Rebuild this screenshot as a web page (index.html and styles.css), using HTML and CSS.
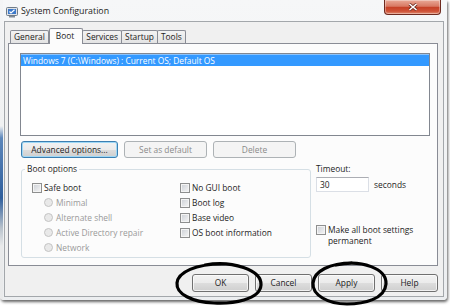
FILE: index.html
```html
<!DOCTYPE html>
<html lang="en">

<head>
    <meta charset="utf-8">
    <meta name="viewport" content="width=device-width, initial-scale=1.0">
    <title>System Configuration</title>
    <link rel="stylesheet" href="styles.css">
</head>

<body>
    <div class="window">
        <div class="titlebar">
            <svg class="app-icon" width="12" height="12" viewBox="0 0 12 12">
                <rect x="0.5" y="1.5" width="11" height="8" rx="1" fill="#dfe3e8" stroke="#6f7b88"/>
                <rect x="2" y="3" width="8" height="5" fill="#3b78c9"/>
                <path d="M3.5 5.5 L5 7 L8.5 3.8" fill="none" stroke="#fff" stroke-width="1.2"/>
                <rect x="3" y="10" width="6" height="1.5" fill="#7f8a96"/>
            </svg>
            <span class="title">System Configuration</span>
            <button class="close">
                <svg width="10" height="8" viewBox="0 0 10 8">
                    <path d="M1.5 1 L8.5 7 M8.5 1 L1.5 7" stroke="#6b2a1e" stroke-width="3"/>
                    <path d="M1.5 1 L8.5 7 M8.5 1 L1.5 7" stroke="#fff" stroke-width="1.6"/>
                </svg>
            </button>
        </div>

        <div class="client">
            <nav class="tabs">
                <span class="tab">General</span>
                <span class="tab current">Boot</span>
                <span class="tab">Services</span>
                <span class="tab">Startup</span>
                <span class="tab">Tools</span>
            </nav>

            <section class="panel">
                <ul class="oslist">
                    <li class="selected">Windows 7 (C:\Windows) : Current OS; Default OS</li>
                </ul>

                <div class="list-buttons">
                    <button class="btn default advanced">Advanced options...</button>
                    <button class="btn" disabled>Set as default</button>
                    <button class="btn" disabled>Delete</button>
                </div>

                <div class="options">
                    <fieldset class="group">
                        <legend>Boot options</legend>
                        <div class="col">
                            <label class="opt"><span class="box"></span>Safe boot</label>
                            <label class="opt sub off"><span class="dot"></span>Minimal</label>
                            <label class="opt sub off"><span class="dot"></span>Alternate shell</label>
                            <label class="opt sub off"><span class="dot"></span>Active Directory repair</label>
                            <label class="opt sub off"><span class="dot"></span>Network</label>
                        </div>
                        <div class="col">
                            <label class="opt"><span class="box"></span>No GUI boot</label>
                            <label class="opt"><span class="box"></span>Boot log</label>
                            <label class="opt"><span class="box"></span>Base video</label>
                            <label class="opt"><span class="box"></span>OS boot information</label>
                        </div>
                    </fieldset>

                    <div class="side">
                        <div class="timeout-label">Timeout:</div>
                        <div class="timeout">
                            <span class="field">30</span>
                            <span>seconds</span>
                        </div>
                        <label class="permanent"><span class="box"></span><span>Make all boot settings<br>permanent</span></label>
                    </div>
                </div>
            </section>

            <div class="dialog-buttons">
                <button class="btn">OK</button>
                <button class="btn">Cancel</button>
                <button class="btn">Apply</button>
                <button class="btn">Help</button>
            </div>
        </div>
    </div>

    <svg class="marks" width="450" height="306" viewBox="0 0 450 306">
        <path d="M205 265 C232 260 262 270 261 285 C260 300 232 304 214 303 C192 302 176 294 177 283 C178 272 196 264 222 264" fill="none" stroke="#000" stroke-width="3.2" stroke-linecap="round"/>
        <path d="M336 265 C362 259 387 269 386 284 C385 299 364 304 347 304 C328 304 312 295 313 283 C314 271 330 263 352 263" fill="none" stroke="#000" stroke-width="3.2" stroke-linecap="round"/>
    </svg>
</body>

</html>
```

FILE: styles.css
```css
* {
    box-sizing: border-box;
}

html,
body {
    margin: 0;
}

body {
    position: relative;
    width: 450px;
    height: 306px;
    overflow: hidden;
    background: #fff;
    font-family: "Open Sans", "Liberation Sans", sans-serif;
    font-size: 8.4px;
    color: #1c1c1c;
}

.window {
    width: 447px;
    height: 300px;
    padding: 0 3px 3px 4px;
    border-radius: 0 0 4px 4px;
    background:
        linear-gradient(to bottom, #f4f5f6 0, #f0f1f2 42%, #5d87bb 46%, #2f5e9c 66%, #b8c2cc 76%, #e9eaeb 82%) no-repeat 0 0 / 3px 100%,
        linear-gradient(to bottom, #f6f7f8, #eceef0);
    box-shadow: 1px 2px 3px rgba(0, 0, 0, .6);
}

.titlebar {
    height: 21px;
    display: flex;
    align-items: flex-start;
}

.app-icon {
    margin: 6px 0 0 2px;
}

.title {
    margin: 6px 0 0 3px;
    font-size: 8.8px;
    line-height: 11px;
}

.close {
    margin-left: auto;
    margin-right: 3px;
    width: 57px;
    height: 15px;
    padding: 0;
    border: 1px solid #6e2a1f;
    border-top: 0;
    border-radius: 0 0 4px 4px;
    background: linear-gradient(to bottom, #e9a997 0, #d87963 45%, #c64127 52%, #cf5237 80%, #e08d72 100%);
    box-shadow: inset 0 0 0 1px rgba(255, 255, 255, .35);
    display: flex;
    align-items: center;
    justify-content: center;
}

.client {
    height: 276px;
    border: 1px solid #a3a7ab;
    background: #f0f0f0;
    padding: 6px 5px 0 3px;
}

/* tabs */
.tabs {
    position: relative;
    z-index: 1;
    display: flex;
    align-items: flex-end;
    height: 16px;
    margin: 0 0 -1px 2px;
}

.tab {
    height: 13px;
    margin-bottom: 1px;
    margin-right: -1px;
    padding: 0 3px;
    border: 1px solid #898c95;
    border-bottom: 0;
    border-radius: 2px 2px 0 0;
    background: linear-gradient(to bottom, #f3f3f3, #e3e3e3);
    line-height: 12px;
}

.tab.current {
    height: 16px;
    margin: 0 -1px 0 1px;
    padding: 0 8px 0 6px;
    background: #fcfcfc;
    line-height: 13px;
}

.panel {
    height: 223px;
    border: 1px solid #898c95;
    background: #fcfcfc;
    padding: 9px 7px 0 11px;
}

.oslist {
    list-style: none;
    margin: 0;
    padding: 0;
    height: 83px;
    border: 1px solid #828790;
    background: #fff;
}

.oslist li {
    height: 12px;
    padding-left: 2px;
    line-height: 11px;
    background: #3399ff;
    border-top: 1px solid #8cc3fb;
    color: #fff;
}

/* buttons */
.btn {
    height: 17px;
    padding: 0;
    border: 1px solid #707070;
    border-radius: 3px;
    background: linear-gradient(to bottom, #f2f2f2 0, #ebebeb 50%, #dddddd 51%, #cfcfcf 100%);
    box-shadow: inset 0 0 0 1px rgba(255, 255, 255, .7);
    font: inherit;
    color: #1c1c1c;
    line-height: 14px;
}

.btn:disabled {
    border-color: #adb2b5;
    background: #f4f4f4;
    box-shadow: none;
    color: #8a8a8a;
}

.btn.default {
    border-color: #3c7fb1;
    box-shadow: inset 0 0 0 1px #9fd8f6;
}

.list-buttons {
    display: flex;
    gap: 6px;
    margin: 5px 0 0 1px;
}

.list-buttons .btn {
    width: 83px;
}

.list-buttons .advanced {
    width: 97px;
}

/* boot options */
.options {
    display: flex;
    gap: 5px;
    margin: 6px 0 0 1px;
}

.group {
    display: flex;
    width: 290px;
    margin: 0;
    padding: 6px 0 2px 10px;
    border: 1px solid #d5dfe5;
    border-radius: 3px;
}

.group legend {
    margin-left: -7px;
    padding: 0 2px;
    line-height: 10px;
}

.col {
    display: flex;
    flex-direction: column;
}

.col:first-of-type {
    width: 148px;
}

.opt {
    display: flex;
    align-items: center;
    height: 15px;
}

.box {
    flex: none;
    width: 10px;
    height: 10px;
    margin-right: 2px;
    border: 1px solid #8e8f8f;
    background: linear-gradient(135deg, #cbcfd5, #f6f6f6);
    box-shadow: inset 0 0 0 1px #f4f4f4;
}

.opt.sub {
    padding-left: 12px;
}

.dot {
    width: 9px;
    height: 9px;
    margin-right: 3px;
    border: 1px solid #c4c4c4;
    border-radius: 50%;
    background: #e9e9e9;
}

.off {
    color: #9a9a9a;
}

.side {
    display: flex;
    flex-direction: column;
}

.timeout-label {
    line-height: 10px;
}

.timeout {
    display: flex;
    align-items: center;
    gap: 5px;
    margin-top: 3px;
}

.field {
    width: 53px;
    height: 15px;
    padding-left: 3px;
    border: 1px solid #dbdfe6;
    border-top-color: #abadb3;
    background: #fff;
    line-height: 13px;
}

.permanent {
    display: flex;
    align-items: flex-start;
    margin-top: 32px;
    line-height: 11px;
}

.permanent .box {
    margin-top: 1px;
}

/* dialog buttons */
.dialog-buttons {
    display: flex;
    justify-content: flex-end;
    gap: 6px;
    margin-top: 8px;
}

.dialog-buttons .btn {
    width: 57px;
    height: 18px;
}

.marks {
    position: absolute;
    left: 0;
    top: 0;
    pointer-events: none;
}
```
